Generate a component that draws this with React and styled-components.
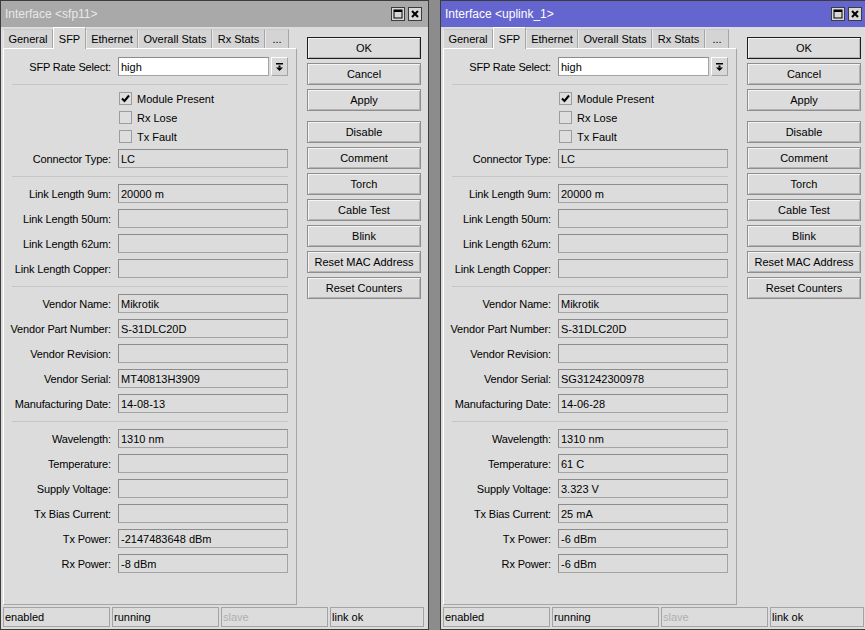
import React from 'react';
import styled, { createGlobalStyle } from 'styled-components';

const GlobalStyle = createGlobalStyle`
  html, body { margin: 0; padding: 0; background: #8c8c8c; }
  body { font-family: "Liberation Sans", Arial, sans-serif; font-size: 11px; color: #000; }
`;

const Desktop = styled.div`
  display: flex;
  gap: 11px;
  width: 865px;
  height: 630px;
  overflow: hidden;
  background: #8c8c8c;
`;

const Window = styled.div`
  flex: 0 0 429px;
  height: 630px;
  box-sizing: border-box;
  border: 1px solid #3c3c3c;
  background: #dcdcdc;
  display: flex;
  flex-direction: column;
`;

const TitleBar = styled.div`
  height: 26px;
  display: flex;
  align-items: center;
  padding: 0 6px 0 4px;
  background: ${p => (p.$active ? '#6565cf' : '#a9a9a9')};
  color: ${p => (p.$active ? '#ffffff' : '#e8e8e8')};
  font-size: 12px;
`;

const Title = styled.span`
  flex: 1;
`;

const TitleButtons = styled.div`
  display: flex;
  gap: 3px;
`;

const TitleButton = styled.div`
  width: 12px;
  height: 12px;
  border: 1px solid #3c3c3c;
  background: #d8d8d8;
  display: flex;
  align-items: center;
  justify-content: center;
`;

const Body = styled.div`
  display: flex;
  padding-left: 2px;
  height: 578px;
`;

const LeftCol = styled.div`
  width: 294px;
  display: flex;
  flex-direction: column;
`;

const Tabs = styled.div`
  display: flex;
  align-items: flex-end;
  height: 21px;
`;

const Tab = styled.div`
  box-sizing: border-box;
  width: ${p => p.$w}px;
  height: ${p => (p.$selected ? '22px' : '19px')};
  margin-bottom: ${p => (p.$selected ? '-1px' : '0')};
  display: flex;
  align-items: center;
  justify-content: center;
  white-space: nowrap;
  background: ${p => (p.$selected ? '#dcdcdc' : '#d4d4d4')};
  border: 1px solid #a6a6a6;
  border-bottom: none;
  border-top-color: ${p => (p.$selected ? '#ffffff' : '#c8c8c8')};
  border-left-color: ${p => (p.$selected ? '#ffffff' : '#e8e8e8')};
  position: relative;
  z-index: ${p => (p.$selected ? 1 : 0)};
`;

const Panel = styled.div`
  flex: 1;
  box-sizing: border-box;
  border: 1px solid #a6a6a6;
  border-top-color: #ffffff;
  border-left-color: #ffffff;
  padding-top: 8px;
  display: flex;
  flex-direction: column;
`;

const Section = styled.div`
  display: flex;
  flex-direction: column;
  gap: 6px;
`;

const Separator = styled.div`
  height: 1px;
  width: 276px;
  margin: 8px 0 7px 8px;
  background: #c6c6c6;
`;

const Row = styled.div`
  display: grid;
  grid-template-columns: 107px 170px;
  column-gap: 7px;
  align-items: center;
  height: ${p => (p.$check ? '13px' : '19px')};
`;

const Label = styled.div`
  text-align: right;
  white-space: nowrap;
  letter-spacing: -0.15px;
`;

const Field = styled.div`
  box-sizing: border-box;
  height: 19px;
  border: 1px solid #a4a4a4;
  border-top-color: #8c8c8c;
  border-left-color: #8c8c8c;
  padding: 0 2px;
  display: flex;
  align-items: center;
  white-space: nowrap;
  background: #dcdcdc;
`;

const ComboWrap = styled.div`
  display: flex;
  gap: 2px;
  height: 19px;
`;

const ComboInput = styled(Field)`
  flex: 1;
  background: #ffffff;
`;

const ComboButton = styled.div`
  box-sizing: border-box;
  width: 17px;
  height: 19px;
  border: 1px solid #a4a4a4;
  border-top-color: #ffffff;
  border-left-color: #ffffff;
  background: #d8d8d8;
  display: flex;
  align-items: center;
  justify-content: center;
`;

const CheckLine = styled.label`
  display: flex;
  align-items: center;
  gap: 5px;
  padding-left: 1px;
`;

const CheckBox = styled.span`
  box-sizing: border-box;
  width: 13px;
  height: 13px;
  border: 1px solid #9c9c9c;
  background: #dedede;
  display: flex;
  align-items: center;
  justify-content: center;
`;

const ButtonCol = styled.div`
  margin-left: 10px;
  padding-top: 10px;
  width: 114px;
  display: flex;
  flex-direction: column;
  gap: 4px;
`;

const Button = styled.div`
  box-sizing: border-box;
  height: 22px;
  display: flex;
  align-items: center;
  justify-content: center;
  background: #dcdcdc;
  border: 1px solid ${p => (p.$default ? '#1e1e1e' : '#8e8e8e')};
  box-shadow: inset 1px 1px 0 #f4f4f4, inset -1px -1px 0 #b4b4b4;
  margin-top: ${p => (p.$group ? '6px' : '0')};
`;

const StatusBar = styled.div`
  display: flex;
  gap: 2px;
  margin: 2px 0 0 2px;
`;

const StatusCell = styled.div`
  box-sizing: border-box;
  width: ${p => p.$w}px;
  height: 20px;
  border: 1px solid #a4a4a4;
  padding-left: 1px;
  display: flex;
  align-items: center;
  color: ${p => (p.$dim ? '#b0b0b0' : '#000')};
`;

const MaxIcon = () => (
  <svg width="10" height="10" viewBox="0 0 10 10">
    <rect x="1" y="1" width="8" height="8" fill="none" stroke="#000" strokeWidth="1" />
    <rect x="1" y="1" width="8" height="2" fill="#000" />
  </svg>
);

const CloseIcon = () => (
  <svg width="10" height="10" viewBox="0 0 10 10">
    <path d="M2 2 L8 8 M8 2 L2 8" stroke="#000" strokeWidth="2" />
  </svg>
);

const DropIcon = () => (
  <svg width="7" height="8" viewBox="0 0 7 8">
    <rect x="0" y="0" width="7" height="1.5" fill="#000" />
    <rect x="2.5" y="2.5" width="2" height="2" fill="#000" />
    <path d="M0 4.5 H7 L3.5 8 Z" fill="#000" />
  </svg>
);

const CheckMark = () => (
  <svg width="9" height="9" viewBox="0 0 9 9">
    <path d="M1 4.5 L3.5 7 L8 1.5" fill="none" stroke="#000" strokeWidth="2" />
  </svg>
);

const tabs = [
  ['General', 50], ['SFP', 33], ['Ethernet', 52],
  ['Overall Stats', 74], ['Rx Stats', 53], ['...', 24],
];
const buttons = ['OK', 'Cancel', 'Apply', 'Disable', 'Comment', 'Torch', 'Cable Test', 'Blink', 'Reset MAC Address', 'Reset Counters'];

const FieldRow = ({ label, value }) => (
  <Row>
    <Label>{label}</Label>
    <Field>{value}</Field>
  </Row>
);

const CheckRow = ({ label, checked }) => (
  <Row $check>
    <span />
    <CheckLine>
      <CheckBox>{checked && <CheckMark />}</CheckBox>
      {label}
    </CheckLine>
  </Row>
);

const InterfaceWindow = ({ name, active, d }) => (
  <Window>
    <TitleBar $active={active}>
      <Title>Interface &lt;{name}&gt;</Title>
      <TitleButtons>
        <TitleButton><MaxIcon /></TitleButton>
        <TitleButton><CloseIcon /></TitleButton>
      </TitleButtons>
    </TitleBar>
    <Body>
      <LeftCol>
        <Tabs>
          {tabs.map(([t, w]) => (
            <Tab key={t} $w={w} $selected={t === 'SFP'}>{t}</Tab>
          ))}
        </Tabs>
        <Panel>
          <Row>
            <Label>SFP Rate Select:</Label>
            <ComboWrap>
              <ComboInput>high</ComboInput>
              <ComboButton><DropIcon /></ComboButton>
            </ComboWrap>
          </Row>
          <Separator />
          <Section>
            <CheckRow label="Module Present" checked />
            <CheckRow label="Rx Lose" />
            <CheckRow label="Tx Fault" />
            <FieldRow label="Connector Type:" value="LC" />
          </Section>
          <Separator />
          <Section>
            <FieldRow label="Link Length 9um:" value="20000 m" />
            <FieldRow label="Link Length 50um:" value="" />
            <FieldRow label="Link Length 62um:" value="" />
            <FieldRow label="Link Length Copper:" value="" />
          </Section>
          <Separator />
          <Section>
            <FieldRow label="Vendor Name:" value="Mikrotik" />
            <FieldRow label="Vendor Part Number:" value="S-31DLC20D" />
            <FieldRow label="Vendor Revision:" value="" />
            <FieldRow label="Vendor Serial:" value={d.serial} />
            <FieldRow label="Manufacturing Date:" value={d.date} />
          </Section>
          <Separator />
          <Section>
            <FieldRow label="Wavelength:" value="1310 nm" />
            <FieldRow label="Temperature:" value={d.temp} />
            <FieldRow label="Supply Voltage:" value={d.volt} />
            <FieldRow label="Tx Bias Current:" value={d.bias} />
            <FieldRow label="Tx Power:" value={d.tx} />
            <FieldRow label="Rx Power:" value={d.rx} />
          </Section>
        </Panel>
      </LeftCol>
      <ButtonCol>
        {buttons.map((b, i) => (
          <Button key={b} $default={b === 'OK'} $group={i === 3}>{b}</Button>
        ))}
      </ButtonCol>
    </Body>
    <StatusBar>
      <StatusCell $w={107}>enabled</StatusCell>
      <StatusCell $w={107}>running</StatusCell>
      <StatusCell $w={107} $dim>slave</StatusCell>
      <StatusCell $w={94}>link ok</StatusCell>
    </StatusBar>
  </Window>
);

const left = {
  serial: 'MT40813H3909', date: '14-08-13', temp: '', volt: '', bias: '',
  tx: '-2147483648 dBm', rx: '-8 dBm',
};
const right = {
  serial: 'SG31242300978', date: '14-06-28', temp: '61 C', volt: '3.323 V', bias: '25 mA',
  tx: '-6 dBm', rx: '-6 dBm',
};

export default function App() {
  return (
    <>
      <GlobalStyle />
      <Desktop>
        <InterfaceWindow name="sfp11" d={left} />
        <InterfaceWindow name="uplink_1" active d={right} />
      </Desktop>
    </>
  );
}
